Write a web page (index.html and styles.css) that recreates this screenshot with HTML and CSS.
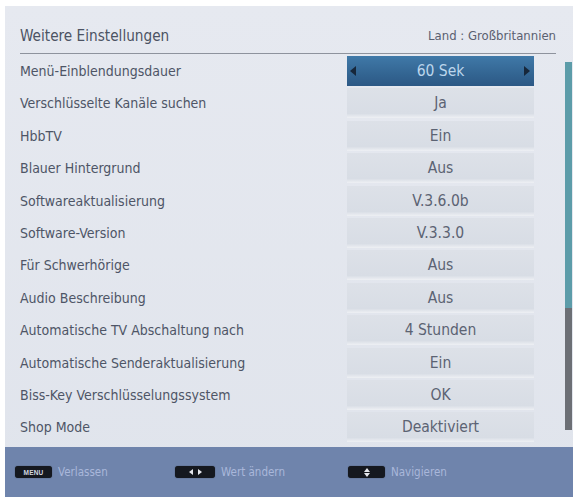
FILE: index.html
```html
<!DOCTYPE html>
<html lang="de">
<head>
<meta charset="utf-8">
<title>Weitere Einstellungen</title>
<link rel="stylesheet" href="styles.css">
</head>
<body>
<div class="panel">
  <div class="header">
    <span class="title">Weitere Einstellungen</span>
    <span class="country">Land : Großbritannien</span>
  </div>
  <div class="main">
    <ul class="list">
      <li class="row"><span class="label">Menü-Einblendungsdauer</span><span class="value active"><span class="arrow left"></span>60 Sek<span class="arrow right"></span></span></li>
      <li class="row"><span class="label">Verschlüsselte Kanäle suchen</span><span class="value">Ja</span></li>
      <li class="row"><span class="label">HbbTV</span><span class="value">Ein</span></li>
      <li class="row"><span class="label">Blauer Hintergrund</span><span class="value">Aus</span></li>
      <li class="row"><span class="label">Softwareaktualisierung</span><span class="value">V.3.6.0b</span></li>
      <li class="row"><span class="label">Software-Version</span><span class="value">V.3.3.0</span></li>
      <li class="row"><span class="label">Für Schwerhörige</span><span class="value">Aus</span></li>
      <li class="row"><span class="label">Audio Beschreibung</span><span class="value">Aus</span></li>
      <li class="row"><span class="label">Automatische TV Abschaltung nach</span><span class="value">4 Stunden</span></li>
      <li class="row"><span class="label">Automatische Senderaktualisierung</span><span class="value">Ein</span></li>
      <li class="row"><span class="label">Biss-Key Verschlüsselungssystem</span><span class="value">OK</span></li>
      <li class="row"><span class="label">Shop Mode</span><span class="value">Deaktiviert</span></li>
    </ul>
    <div class="scrollbar"><div class="thumb"></div></div>
  </div>
  <div class="footer">
    <div class="hint hint-menu"><span class="key key-menu">MENU</span><span class="hint-text">Verlassen</span></div>
    <div class="hint hint-lr"><span class="key key-lr"><span class="tri tri-l"></span><span class="tri tri-r"></span></span><span class="hint-text">Wert ändern</span></div>
    <div class="hint hint-ud"><span class="key key-ud"><span class="tri tri-u"></span><span class="tri tri-d"></span></span><span class="hint-text">Navigieren</span></div>
  </div>
</div>
</body>
</html>
```

FILE: styles.css
```css
html, body {
  margin: 0;
  padding: 0;
  background: #ffffff;
}

body {
  font-family: "DejaVu Sans", "Liberation Sans", sans-serif;
  font-stretch: condensed;
}

.panel {
  margin: 6px 0 0 5px;
  width: 568px;
  background: linear-gradient(to bottom, #e6e9f0, #e0e4ec);
}

.header {
  margin: 0 17px 0 15px;
  height: 48px;
  border-bottom: 1px solid #8e939d;
  display: flex;
  justify-content: space-between;
  align-items: flex-end;
  box-sizing: border-box;
}

.title {
  font-size: 15.2px;
  color: #4c5363;
  padding-bottom: 8px;
}

.country {
  font-size: 13px;
  color: #5a6070;
  padding-bottom: 10px;
}

.main {
  display: flex;
  align-items: flex-start;
  padding-top: 2px;
}

.list {
  list-style: none;
  margin: 0;
  padding: 0;
  width: 529px;
  display: flex;
  flex-direction: column;
  gap: 2.4px;
}

.row {
  display: grid;
  grid-template-columns: 1fr 187px;
  height: 30px;
  align-items: center;
}

.label {
  padding-left: 15px;
  font-size: 14px;
  color: #4e5566;
}

.value {
  height: 30px;
  display: flex;
  align-items: center;
  justify-content: center;
  position: relative;
  font-size: 15.5px;
  color: #5c6373;
  background: linear-gradient(to bottom, #dde1e8 0%, #d8dde5 85%, #eef0f4 100%);
}

.value.active {
  color: #bcd6ec;
  background: linear-gradient(to bottom, #4079a8 0%, #336592 60%, #2c5885 100%);
}

.arrow {
  position: absolute;
  top: 10px;
  width: 0;
  height: 0;
  border-top: 5px solid transparent;
  border-bottom: 5px solid transparent;
}

.arrow.left {
  left: 3px;
  border-right: 6px solid #17273a;
}

.arrow.right {
  right: 4px;
  border-left: 6px solid #17273a;
}

.scrollbar {
  margin: 6px 0 0 31px;
  width: 7px;
  height: 368px;
  background: #6c6f75;
}

.thumb {
  height: 246px;
  background: #5c9ca9;
}

.footer {
  margin-top: 5px;
  height: 50px;
  background: #6f84ac;
  display: flex;
  align-items: center;
  padding-left: 10px;
}

.hint {
  display: flex;
  align-items: center;
  gap: 6px;
}

.hint-menu {
  width: 160px;
}

.hint-lr {
  width: 173px;
}

.hint-text {
  font-size: 11.5px;
  color: #a9b7da;
}

.key {
  height: 12px;
  border-radius: 3px;
  background: #15181f;
  display: flex;
  align-items: center;
  justify-content: center;
  box-shadow: 0 0 1px #2a2f3a;
}

.key-menu {
  width: 37px;
  font-size: 6.5px;
  color: #d4d8e2;
  font-family: "Liberation Sans", sans-serif;
  font-weight: bold;
  letter-spacing: 0.2px;
}

.key-lr {
  width: 40px;
  gap: 5px;
}

.key-ud {
  width: 37px;
  flex-direction: column;
  gap: 1px;
}

.tri {
  width: 0;
  height: 0;
}

.tri-l {
  border-top: 3px solid transparent;
  border-bottom: 3px solid transparent;
  border-right: 4px solid #e6e8ee;
}

.tri-r {
  border-top: 3px solid transparent;
  border-bottom: 3px solid transparent;
  border-left: 4px solid #e6e8ee;
}

.tri-u {
  border-left: 3px solid transparent;
  border-right: 3px solid transparent;
  border-bottom: 4px solid #e6e8ee;
}

.tri-d {
  border-left: 3px solid transparent;
  border-right: 3px solid transparent;
  border-top: 4px solid #e6e8ee;
}
```
